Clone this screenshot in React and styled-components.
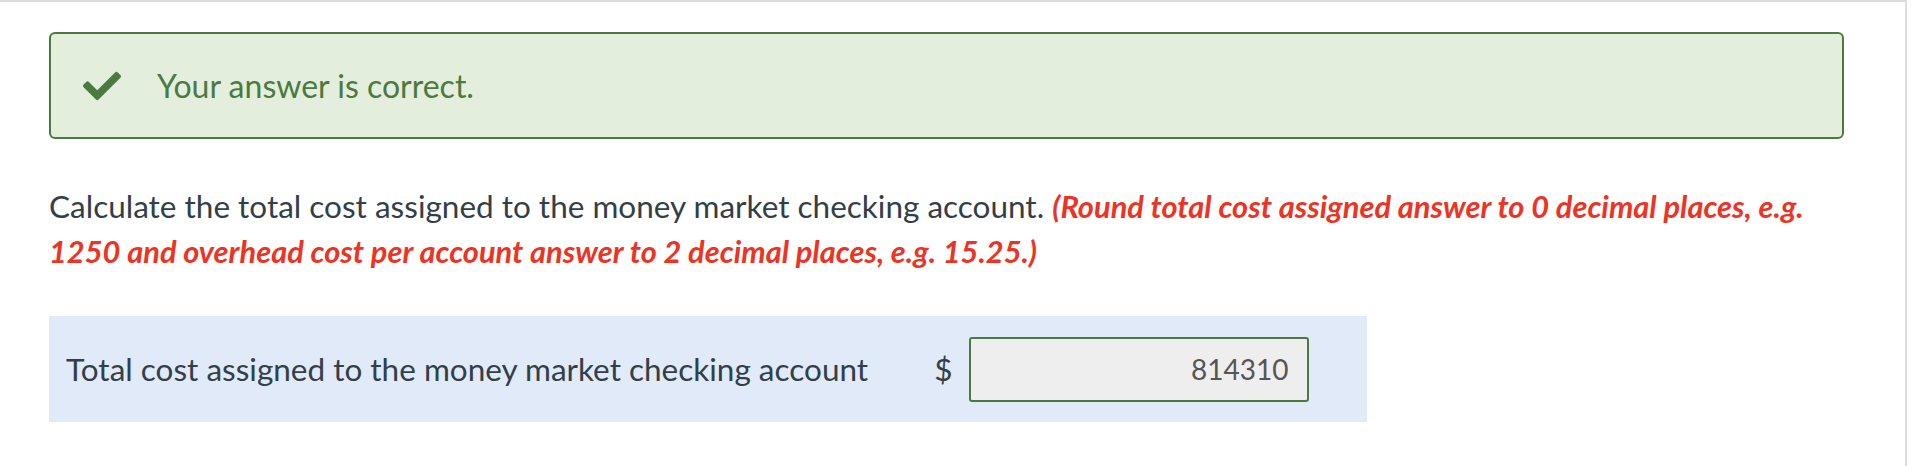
import React from 'react'
import styled, { createGlobalStyle } from 'styled-components'
import { FaCheck } from 'react-icons/fa'

const GlobalStyle = createGlobalStyle`
	html, body {
		margin: 0;
		padding: 0;
		background: #ffffff;
	}
	body {
		font-family: Lato, "Open Sans", "Liberation Sans", sans-serif;
		color: #333f48;
	}
`

const StyledPage = styled.div`
	width: 1907px;
	height: 466px;
	box-sizing: border-box;
	border-top: 2px solid #dddddd;
	border-right: 2px solid #dddddd;
	padding: 30px 61px 0 49px;
`

const StyledFeedback = styled.div`
	display: flex;
	align-items: center;
	gap: 36px;
	height: 107px;
	box-sizing: border-box;
	padding: 0 32px;
	background-color: #e3efdc;
	border: 2px solid #4b7a41;
	border-radius: 6px;
	color: #4b7a41;
	font-size: 32px;

	svg {
		flex: 0 0 auto;
	}
`

const StyledQuestion = styled.p`
	margin: 45px 0 42px;
	font-size: 31.5px;
	line-height: 45px;
	color: #333f48;

	em {
		font-size: 30.8px;
		font-weight: 700;
		font-style: italic;
		color: #ec3324;
	}
`

const StyledAnswerRow = styled.div`
	display: flex;
	align-items: center;
	width: 1318px;
	height: 106px;
	box-sizing: border-box;
	padding: 0 17px;
	background-color: #e0eaf8;
	font-size: 31.5px;
`

const StyledLabel = styled.span`
	flex: 0 0 auto;
	margin-right: 66px;
`

const StyledCurrency = styled.span`
	margin-right: 17px;
`

const StyledInput = styled.input`
	width: 340px;
	height: 65px;
	box-sizing: border-box;
	padding: 0 19px;
	background-color: #eeeeee;
	border: 2px solid #4b7a41;
	border-radius: 3px;
	font-family: inherit;
	font-size: 28px;
	color: #555555;
	text-align: right;
	outline: none;
`

export default function App() {
	return <StyledPage>
		<GlobalStyle/>
		<StyledFeedback>
			<FaCheck size={ 38 }/>
			<span>Your answer is correct.</span>
		</StyledFeedback>
		<StyledQuestion>
			Calculate the total cost assigned to the money market checking account. <em>(Round total cost assigned answer to 0 decimal places, e.g. 1250 and overhead cost per account answer to 2 decimal places, e.g. 15.25.)</em>
		</StyledQuestion>
		<StyledAnswerRow>
			<StyledLabel>Total cost assigned to the money market checking account</StyledLabel>
			<StyledCurrency>$</StyledCurrency>
			<StyledInput readOnly value="814310"/>
		</StyledAnswerRow>
	</StyledPage>
}
